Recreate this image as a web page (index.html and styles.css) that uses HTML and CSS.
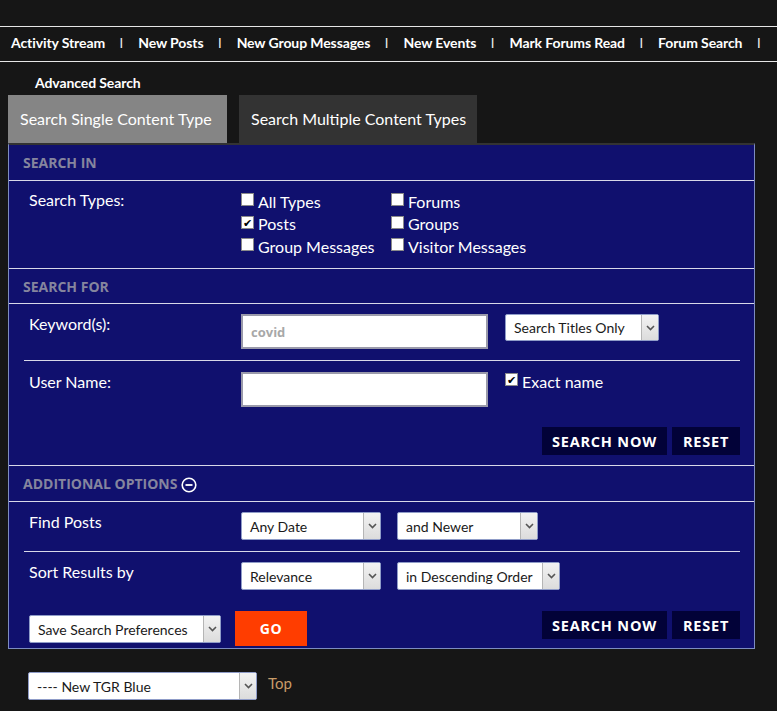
FILE: index.html
```html
<!DOCTYPE html>
<html>
<head>
<meta charset="utf-8">
<link rel="stylesheet" href="styles.css">
</head>
<body>
<div class="topgap"></div>
<nav class="navbar">
  <a class="navlink">Activity Stream</a><span class="sep">I</span>
  <a class="navlink">New Posts</a><span class="sep">I</span>
  <a class="navlink">New Group Messages</a><span class="sep">I</span>
  <a class="navlink">New Events</a><span class="sep">I</span>
  <a class="navlink">Mark Forums Read</a><span class="sep">I</span>
  <a class="navlink">Forum Search</a><span class="sep">I</span>
</nav>
<div class="subnav"><a class="navlink">Advanced Search</a></div>
<div class="tabs">
  <div class="tab tab-active">Search Single Content Type</div>
  <div class="tab tab-other">Search Multiple Content Types</div>
</div>
<div class="panel">
  <div class="sechead">Search In</div>
  <div class="row row-types">
    <div class="label">Search Types:</div>
    <div class="typegrid">
      <div class="typecol">
        <label class="cb"><span class="box"></span>All Types</label>
        <label class="cb"><span class="box checked">&#10004;</span>Posts</label>
        <label class="cb"><span class="box"></span>Group Messages</label>
      </div>
      <div class="typecol">
        <label class="cb"><span class="box"></span>Forums</label>
        <label class="cb"><span class="box"></span>Groups</label>
        <label class="cb"><span class="box"></span>Visitor Messages</label>
      </div>
    </div>
  </div>
  <div class="sechead sechead-for">Search For</div>
  <div class="row row-keyword">
    <div class="label">Keyword(s):</div>
    <div class="textbox"><span class="placeholder">covid</span></div>
    <div class="select sel-titles"><span class="seltext">Search Titles Only</span><span class="arrow"><svg width="9" height="6" viewBox="0 0 9 6"><path d="M1 1 L4.5 4.5 L8 1" fill="none" stroke="#555" stroke-width="1.6"/></svg></span></div>
  </div>
  <div class="divider"></div>
  <div class="row row-user">
    <div class="label">User Name:</div>
    <div class="textbox"></div>
    <label class="cb cb-exact"><span class="box checked">&#10004;</span>Exact name</label>
  </div>
  <div class="btnrow">
    <div class="btn">Search Now</div>
    <div class="btn btn-reset">Reset</div>
  </div>
  <div class="sechead">Additional Options <span class="minus"><svg width="16" height="16" viewBox="0 0 16 16"><circle cx="8" cy="8" r="6.8" fill="none" stroke="#fff" stroke-width="1.6"/><rect x="4.5" y="7.1" width="7" height="1.8" fill="#fff"/></svg></span></div>
  <div class="row row-opt">
    <div class="label">Find Posts</div>
    <div class="select sel-date"><span class="seltext">Any Date</span><span class="arrow"><svg width="9" height="6" viewBox="0 0 9 6"><path d="M1 1 L4.5 4.5 L8 1" fill="none" stroke="#555" stroke-width="1.6"/></svg></span></div>
    <div class="select sel-newer"><span class="seltext">and Newer</span><span class="arrow"><svg width="9" height="6" viewBox="0 0 9 6"><path d="M1 1 L4.5 4.5 L8 1" fill="none" stroke="#555" stroke-width="1.6"/></svg></span></div>
  </div>
  <div class="divider"></div>
  <div class="row row-opt">
    <div class="label">Sort Results by</div>
    <div class="select sel-date"><span class="seltext">Relevance</span><span class="arrow"><svg width="9" height="6" viewBox="0 0 9 6"><path d="M1 1 L4.5 4.5 L8 1" fill="none" stroke="#555" stroke-width="1.6"/></svg></span></div>
    <div class="select sel-order"><span class="seltext">in Descending Order</span><span class="arrow"><svg width="9" height="6" viewBox="0 0 9 6"><path d="M1 1 L4.5 4.5 L8 1" fill="none" stroke="#555" stroke-width="1.6"/></svg></span></div>
  </div>
  <div class="bottomrow">
    <div class="select sel-save"><span class="seltext">Save Search Preferences</span><span class="arrow"><svg width="9" height="6" viewBox="0 0 9 6"><path d="M1 1 L4.5 4.5 L8 1" fill="none" stroke="#555" stroke-width="1.6"/></svg></span></div>
    <div class="gobtn">GO</div>
    <div class="spacer"></div>
    <div class="btn">Search Now</div>
    <div class="btn btn-reset">Reset</div>
  </div>
</div>
<div class="footer">
  <div class="select sel-style"><span class="seltext">---- New TGR Blue</span><span class="arrow"><svg width="9" height="6" viewBox="0 0 9 6"><path d="M1 1 L4.5 4.5 L8 1" fill="none" stroke="#555" stroke-width="1.6"/></svg></span></div>
  <a class="toplink">Top</a>
</div>
</body>
</html>
```
FILE: styles.css
```css
* { box-sizing: border-box; }
body {
  margin: 0;
  background: #161616;
  font-family: Lato, "Noto Sans", sans-serif;
  color: #fff;
}
.topgap { height: 26px; }
.navbar {
  display: flex;
  align-items: center;
  height: 36px;
  border-top: 1px solid #e6e6e6;
  border-bottom: 1px solid #e6e6e6;
  padding-left: 11px;
  padding-bottom: 3px;
  font-size: 14px;
}
.navlink { color: #fff; font-weight: 700; white-space: nowrap; letter-spacing: -0.1px; }
.sep { margin: 0 15px 0 14.5px; font-size: 13px; color: #eee; font-weight: 400; }
.subnav {
  height: 33px;
  padding-left: 35px;
  padding-top: 12px;
  font-size: 14px;
}
.tabs {
  display: flex;
  gap: 12px;
  margin-left: 8px;
  height: 48px;
}
.tab {
  display: flex;
  align-items: center;
  padding: 0 12px 2px;
  font-size: 16px;
  color: #fff;
  white-space: nowrap;
}
.tab-active { background: #858585; width: 219px; }
.tab-other { background: #333333; width: 238px; }
.panel {
  margin-left: 8px;
  width: 747px;
  background: #10106e;
  border: 1px solid #7d8cc0;
  border-top: 2px solid #333;
}
.sechead {
  height: 36px;
  display: flex;
  align-items: center;
  padding-left: 14px;
  font-family: "Open Sans", Lato, sans-serif;
  font-weight: 700;
  font-size: 14px;
  text-transform: uppercase;
  color: #85859e;
  border-bottom: 1px solid #d8d8e8;
}
.sechead-for { height: 35px; }
.minus { display: inline-flex; margin-left: 4px; margin-top: 2px; }
.row {
  display: flex;
  align-items: flex-start;
  padding-left: 20px;
}
.label {
  width: 212px;
  flex: none;
  font-size: 16px;
  line-height: 20px;
}
.row-types {
  padding-top: 10px;
  height: 88px;
  border-bottom: 1px solid #d8d8e8;
}
.row-types .label { margin-top: -1px; }
.typegrid { display: flex; margin-top: -1px; }
.typecol { display: flex; flex-direction: column; }
.typecol:first-child { width: 150px; }
.cb {
  display: flex;
  align-items: center;
  font-size: 16px;
  height: 22.5px;
  white-space: nowrap;
}
.box {
  width: 13px;
  height: 13px;
  background: #fff;
  border: 1px solid #8a8a8a;
  margin-right: 4px;
  margin-top: -3px;
  display: inline-flex;
  align-items: center;
  justify-content: center;
  color: #000;
  font-size: 11px;
  line-height: 1;
}
.row-keyword { height: 56px; padding-top: 10px; }
.row-user { height: 66px; padding-top: 11px; }
.textbox {
  width: 247px;
  height: 35px;
  background: #fff;
  border: 2px solid #9a9aaa;
  display: flex;
  align-items: center;
  padding-left: 8px;
  margin-right: 17px;
}
.placeholder {
  color: #a8a8a8;
  font-weight: 700;
  font-size: 13px;
  font-family: "Open Sans", Lato, sans-serif;
}
.divider {
  height: 1px;
  background: #d8d8e8;
  margin: 0 14px 0 15px;
}
.select {
  display: flex;
  align-items: stretch;
  height: 28px;
  background: #fff;
  border: 1px solid #8f9cc8;
  border-radius: 2px;
  color: #1a1a1a;
  font-size: 14px;
}
.seltext {
  flex: 1;
  display: flex;
  align-items: center;
  padding-left: 8px;
  white-space: nowrap;
  overflow: hidden;
}
.arrow {
  width: 17px;
  flex: none;
  display: flex;
  align-items: center;
  justify-content: center;
  background: linear-gradient(#f2f2f2, #dcdcdc);
  border-left: 1px solid #b5b5b5;
}
.sel-titles { width: 154px; height: 27px; }
.cb-exact { height: 20px; margin-top: -1px; }
.btnrow {
  display: flex;
  justify-content: flex-end;
  gap: 5px;
  padding-right: 14px;
  height: 39px;
  border-bottom: 1px solid #d8d8e8;
}
.btn {
  height: 28px;
  width: 125px;
  background: #020238;
  display: flex;
  align-items: center;
  justify-content: center;
  font-family: "Open Sans", Lato, sans-serif;
  font-weight: 700;
  font-size: 14.5px;
  letter-spacing: 0.8px;
  text-transform: uppercase;
  color: #fff;
}
.btn-reset { width: 68px; }
.row-opt { height: 49px; padding-top: 10px; }
.sel-date { width: 140px; margin-right: 16px; }
.sel-newer { width: 141px; }
.sel-order { width: 163px; }
.bottomrow {
  display: flex;
  align-items: flex-start;
  gap: 5px;
  padding: 10px 14px 0 20px;
  height: 47px;
}
.sel-save { width: 192px; margin-top: 4px; margin-right: 9px; }
.gobtn {
  width: 72px;
  height: 35px;
  background: #ff3d00;
  display: flex;
  align-items: center;
  justify-content: center;
  font-family: "Open Sans", Lato, sans-serif;
  font-weight: 700;
  font-size: 14px;
  letter-spacing: 0.5px;
}
.spacer { flex: 1; }
.footer {
  display: flex;
  align-items: center;
  gap: 11px;
  padding-left: 28px;
  margin-top: 23px;
}
.sel-style { width: 229px; }
.toplink { color: #c89c68; font-size: 15px; margin-top: -6px; }
```
